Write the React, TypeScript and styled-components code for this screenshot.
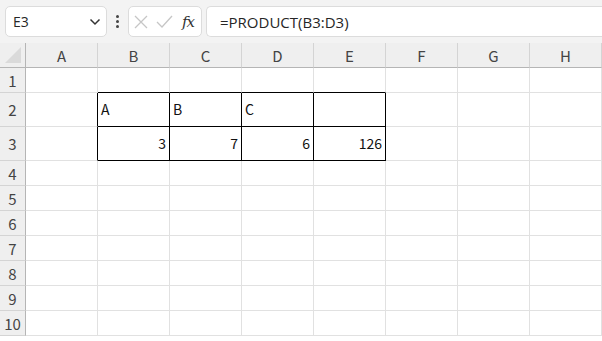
import { Fragment } from "react"
import { createGlobalStyle, styled } from "styled-components"

const GlobalStyle = createGlobalStyle`
    html, body {
        margin: 0;
        padding: 0;
        background: #ffffff;
        overflow: hidden;
    }
    body {
        font-family: "Noto Sans CJK JP", "Noto Sans", sans-serif;
    }
`

const Page = styled.div`
    width: 602px;
    height: 341px;
    display: flex;
    flex-direction: column;
    overflow: hidden;
`

const Toolbar = styled.div`
    height: 43px;
    box-sizing: border-box;
    background: #f3f3f3;
    display: flex;
    align-items: flex-start;
    padding: 6px 0 0 5px;
`

const Box = styled.div`
    height: 31px;
    box-sizing: border-box;
    background: #ffffff;
    border: 1px solid #dcdcdc;
    border-radius: 5px;
    display: flex;
    align-items: center;
`

const NameBox = styled(Box)`
    width: 102px;
    padding: 0 5px 0 7px;
    justify-content: space-between;
    font-family: "Open Sans", "Noto Sans", sans-serif;
    font-size: 14px;
    color: #262626;
`

const Dots = styled.div`
    width: 21px;
    height: 31px;
    display: flex;
    flex-direction: column;
    align-items: center;
    justify-content: center;
    gap: 2px;
    & span {
        width: 3px;
        height: 3px;
        background: #444;
        border-radius: 50%;
    }
`

const FuncBox = styled(Box)`
    width: 74px;
    padding: 0 4px 0 5px;
    gap: 8px;
`

const FxLabel = styled.span`
    font-family: "DejaVu Serif", "Liberation Serif", serif;
    font-style: italic;
    font-size: 15px;
    color: #333;
    margin-left: 1px;
    letter-spacing: -1px;
`

const FormulaBox = styled(Box)`
    flex: 1;
    margin-left: 4px;
    padding-left: 13px;
    border-right: none;
    border-radius: 5px 0 0 5px;
    font-family: "Open Sans", "Noto Sans", sans-serif;
    font-size: 15px;
    color: #262626;
`

const Sheet = styled.div`
    display: grid;
    grid-template-columns: 26px repeat(8, 72px);
    grid-template-rows: 25px 25px 34px 34px repeat(7, 25px);
    background: #ffffff;
`

const HeadCell = styled.div<{ $corner?: boolean; $rowHead?: boolean }>`
    box-sizing: border-box;
    background: #efefef;
    border-right: 1px solid ${p => (p.$corner || p.$rowHead ? "#b5b5b5" : "#d4d4d4")};
    border-bottom: 1px solid ${p => (p.$rowHead ? "#d4d4d4" : "#b5b5b5")};
    display: flex;
    align-items: center;
    justify-content: center;
    font-size: 15px;
    color: #444444;
    position: relative;
`

const Corner = styled.div`
    position: absolute;
    right: 4px;
    bottom: 4px;
    width: 0;
    height: 0;
    border-left: 16px solid transparent;
    border-bottom: 16px solid #dadada;
`

const Cell = styled.div<{ $right: boolean; $bottom: boolean; $num?: boolean }>`
    box-sizing: border-box;
    border-right: 1px solid ${p => (p.$right ? "#000" : "#e1e1e1")};
    border-bottom: 1px solid ${p => (p.$bottom ? "#000" : "#e1e1e1")};
    display: flex;
    align-items: center;
    justify-content: ${p => (p.$num ? "flex-end" : "flex-start")};
    padding: 0 3px 1px 3px;
    font-size: 14px;
    color: #111111;
`

const cols = ["A", "B", "C", "D", "E", "F", "G", "H"]
const data: Record<string, string> = {
    B2: "A",
    C2: "B",
    D2: "C",
    B3: "3",
    C3: "7",
    D3: "6",
    E3: "126",
}

function XIcon() {
    return (
        <svg width="14" height="14" viewBox="0 0 14 14">
            <path d="M1 1 L13 13 M13 1 L1 13" stroke="#c6c6c6" strokeWidth="1.3" fill="none" />
        </svg>
    )
}

function CheckIcon() {
    return (
        <svg width="17" height="14" viewBox="0 0 17 14">
            <path d="M1 7 L6 12 L16 1" stroke="#c6c6c6" strokeWidth="1.3" fill="none" />
        </svg>
    )
}

function Chevron() {
    return (
        <svg width="12" height="8" viewBox="0 0 12 8">
            <path d="M1.5 1.5 L6 6 L10.5 1.5" stroke="#333" strokeWidth="1.5" fill="none" />
        </svg>
    )
}

export default function App() {
    const rows = [1, 2, 3, 4, 5, 6, 7, 8, 9, 10]
    return (
        <>
            <GlobalStyle />
            <Page>
                <Toolbar>
                    <NameBox>
                        E3
                        <Chevron />
                    </NameBox>
                    <Dots>
                        <span />
                        <span />
                        <span />
                    </Dots>
                    <FuncBox>
                        <XIcon />
                        <CheckIcon />
                        <FxLabel>fx</FxLabel>
                    </FuncBox>
                    <FormulaBox>=PRODUCT(B3:D3)</FormulaBox>
                </Toolbar>
                <Sheet>
                    <HeadCell $corner>
                        <Corner />
                    </HeadCell>
                    {cols.map(c => (
                        <HeadCell key={c}>{c}</HeadCell>
                    ))}
                    {rows.map(r => (
                        <Fragment key={r}>
                            <HeadCell $rowHead>{r}</HeadCell>
                            {cols.map((c, ci) => {
                                const right = r >= 2 && r <= 3 && ci <= 4
                                const bottom = r <= 3 && ci >= 1 && ci <= 4
                                const v = data[c + r]
                                return (
                                    <Cell
                                        key={c + r}
                                        $right={right}
                                        $bottom={bottom}
                                        $num={v !== undefined && /^\d+$/.test(v)}
                                    >
                                        {v}
                                    </Cell>
                                )
                            })}
                        </Fragment>
                    ))}
                </Sheet>
            </Page>
        </>
    )
}
